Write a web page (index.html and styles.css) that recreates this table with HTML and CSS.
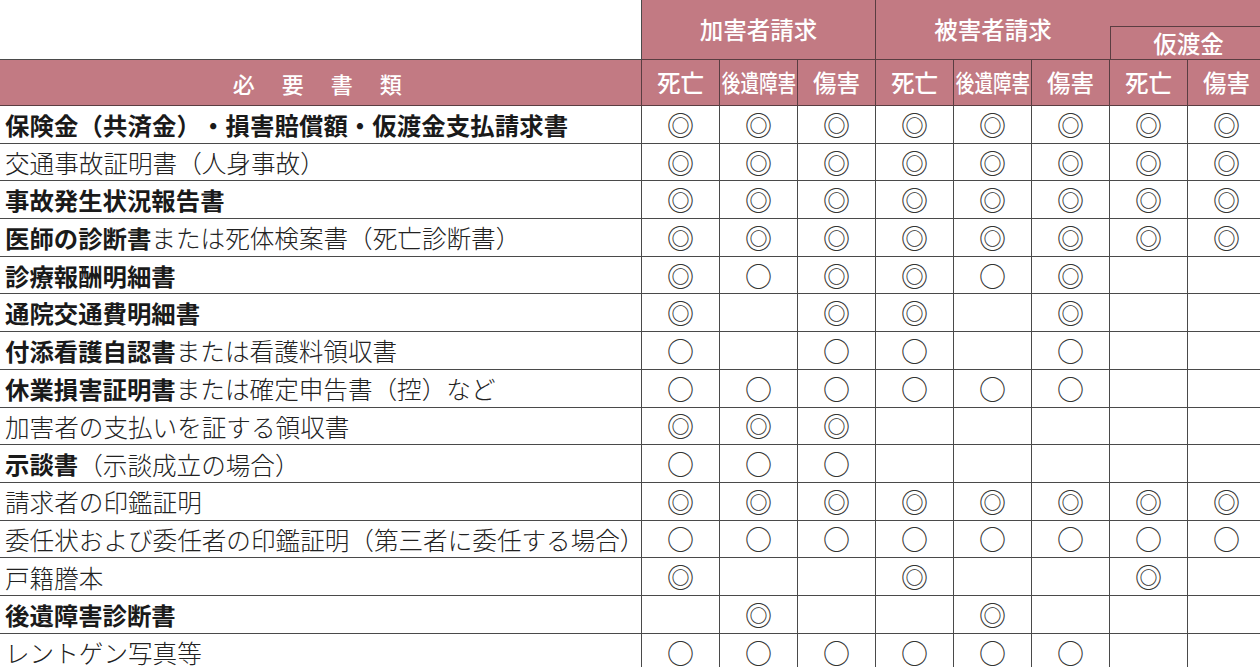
FILE: index.html
```html
<!DOCTYPE html>
<html lang="ja">
<head>
<meta charset="utf-8">
<title>必要書類</title>
<link rel="stylesheet" href="styles.css">
</head>
<body>
<div class="sheet">
  <div class="c blank"></div>
  <div class="c h grp g1">加害者請求</div>
  <div class="c h grp g2">被害者請求</div>
  <div class="c h fill"></div>
  <div class="c h sub">仮渡金</div>

  <div class="c h title">必&#x3000;要&#x3000;書&#x3000;類</div>
  <div class="c h col">死亡</div>
  <div class="c h col"><span class="narrow">後遺障害</span></div>
  <div class="c h col">傷害</div>
  <div class="c h col">死亡</div>
  <div class="c h col"><span class="narrow">後遺障害</span></div>
  <div class="c h col">傷害</div>
  <div class="c h col">死亡</div>
  <div class="c h col">傷害</div>

  <div class="c doc"><b class="tight">保険金（共済金）・損害賠償額・仮渡金支払請求書</b></div>
  <div class="c m">◎</div><div class="c m">◎</div><div class="c m">◎</div><div class="c m">◎</div><div class="c m">◎</div><div class="c m">◎</div><div class="c m">◎</div><div class="c m">◎</div>

  <div class="c doc">交通事故証明書（人身事故）</div>
  <div class="c m">◎</div><div class="c m">◎</div><div class="c m">◎</div><div class="c m">◎</div><div class="c m">◎</div><div class="c m">◎</div><div class="c m">◎</div><div class="c m">◎</div>

  <div class="c doc"><b>事故発生状況報告書</b></div>
  <div class="c m">◎</div><div class="c m">◎</div><div class="c m">◎</div><div class="c m">◎</div><div class="c m">◎</div><div class="c m">◎</div><div class="c m">◎</div><div class="c m">◎</div>

  <div class="c doc"><b>医師の診断書</b>または死体検案書（死亡診断書）</div>
  <div class="c m">◎</div><div class="c m">◎</div><div class="c m">◎</div><div class="c m">◎</div><div class="c m">◎</div><div class="c m">◎</div><div class="c m">◎</div><div class="c m">◎</div>

  <div class="c doc"><b>診療報酬明細書</b></div>
  <div class="c m">◎</div><div class="c m">○</div><div class="c m">◎</div><div class="c m">◎</div><div class="c m">○</div><div class="c m">◎</div><div class="c m"></div><div class="c m"></div>

  <div class="c doc"><b>通院交通費明細書</b></div>
  <div class="c m">◎</div><div class="c m"></div><div class="c m">◎</div><div class="c m">◎</div><div class="c m"></div><div class="c m">◎</div><div class="c m"></div><div class="c m"></div>

  <div class="c doc"><b>付添看護自認書</b>または看護料領収書</div>
  <div class="c m">○</div><div class="c m"></div><div class="c m">○</div><div class="c m">○</div><div class="c m"></div><div class="c m">○</div><div class="c m"></div><div class="c m"></div>

  <div class="c doc"><b>休業損害証明書</b>または確定申告書（控）など</div>
  <div class="c m">○</div><div class="c m">○</div><div class="c m">○</div><div class="c m">○</div><div class="c m">○</div><div class="c m">○</div><div class="c m"></div><div class="c m"></div>

  <div class="c doc">加害者の支払いを証する領収書</div>
  <div class="c m">◎</div><div class="c m">◎</div><div class="c m">◎</div><div class="c m"></div><div class="c m"></div><div class="c m"></div><div class="c m"></div><div class="c m"></div>

  <div class="c doc"><b>示談書</b>（示談成立の場合）</div>
  <div class="c m">○</div><div class="c m">○</div><div class="c m">○</div><div class="c m"></div><div class="c m"></div><div class="c m"></div><div class="c m"></div><div class="c m"></div>

  <div class="c doc">請求者の印鑑証明</div>
  <div class="c m">◎</div><div class="c m">◎</div><div class="c m">◎</div><div class="c m">◎</div><div class="c m">◎</div><div class="c m">◎</div><div class="c m">◎</div><div class="c m">◎</div>

  <div class="c doc">委任状および委任者の印鑑証明（第三者に委任する場合）</div>
  <div class="c m">○</div><div class="c m">○</div><div class="c m">○</div><div class="c m">○</div><div class="c m">○</div><div class="c m">○</div><div class="c m">○</div><div class="c m">○</div>

  <div class="c doc">戸籍謄本</div>
  <div class="c m">◎</div><div class="c m"></div><div class="c m"></div><div class="c m">◎</div><div class="c m"></div><div class="c m"></div><div class="c m">◎</div><div class="c m"></div>

  <div class="c doc"><b>後遺障害診断書</b></div>
  <div class="c m"></div><div class="c m">◎</div><div class="c m"></div><div class="c m"></div><div class="c m">◎</div><div class="c m"></div><div class="c m"></div><div class="c m"></div>

  <div class="c doc last">レントゲン写真等</div>
  <div class="c m last">○</div><div class="c m last">○</div><div class="c m last">○</div><div class="c m last">○</div><div class="c m last">○</div><div class="c m last">○</div><div class="c m last"></div><div class="c m last"></div>
</div>
</body>
</html>
```

FILE: styles.css
```css
html, body {
  margin: 0;
  padding: 0;
  background: #ffffff;
  overflow: hidden;
}

.sheet {
  display: grid;
  grid-template-columns: 642px repeat(8, 78px);
  grid-template-rows: 27px 33px 46px repeat(14, 37.7px) 33px;
  width: 1266px;
  font-family: "Noto Sans CJK JP", "Noto Sans", sans-serif;
  color: #1e1e1e;
  text-spacing-trim: space-all;
  font-kerning: none;
}

.c {
  box-sizing: border-box;
  border-right: 1.5px solid #4a4a4a;
  border-bottom: 1.5px solid #4a4a4a;
  display: flex;
  align-items: center;
  justify-content: center;
  min-width: 0;
  overflow: hidden;
}

.h {
  background: #c27a83;
  color: #ffffff;
  font-size: 23.5px;
  font-weight: 500;
  border-color: #5a3d41;
  line-height: 1;
}

.blank {
  grid-column: 1;
  grid-row: 1 / 3;
  background: #ffffff;
}

.g1 {
  grid-column: 2 / 5;
  grid-row: 1 / 3;
}

.g2 {
  grid-column: 5 / 8;
  grid-row: 1 / 3;
  border-right: none;
}

.fill {
  grid-column: 8 / 10;
  grid-row: 1;
  border-right: none;
}

.sub {
  grid-column: 8 / 10;
  grid-row: 2;
  border-left: 1.5px solid #5a3d41;
  border-right: none;
  padding-top: 2px;
}

.title {
  grid-column: 1;
  font-size: 22px;
  letter-spacing: 2.5px;
  padding-left: 0;
  padding-right: 4px;
}

.col {
  padding-top: 1px;
}

.narrow {
  display: inline-block;
  white-space: nowrap;
  transform: scaleX(0.79);
}

.doc {
  justify-content: flex-start;
  padding-left: 5px;
  font-size: 24.6px;
  font-weight: 300;
  white-space: nowrap;
  color: #222222;
  overflow: visible;
}

.doc b {
  font-size: 24.4px;
  font-weight: 700;
  color: #1a1a1a;
}

.doc b.tight {
  letter-spacing: 0.1px;
}

.m {
  font-size: 27px;
  font-weight: 400;
  color: #333333;
  line-height: 1;
}

.last {
  border-bottom: none;
  padding-top: 4px;
  line-height: 1;
}
```
